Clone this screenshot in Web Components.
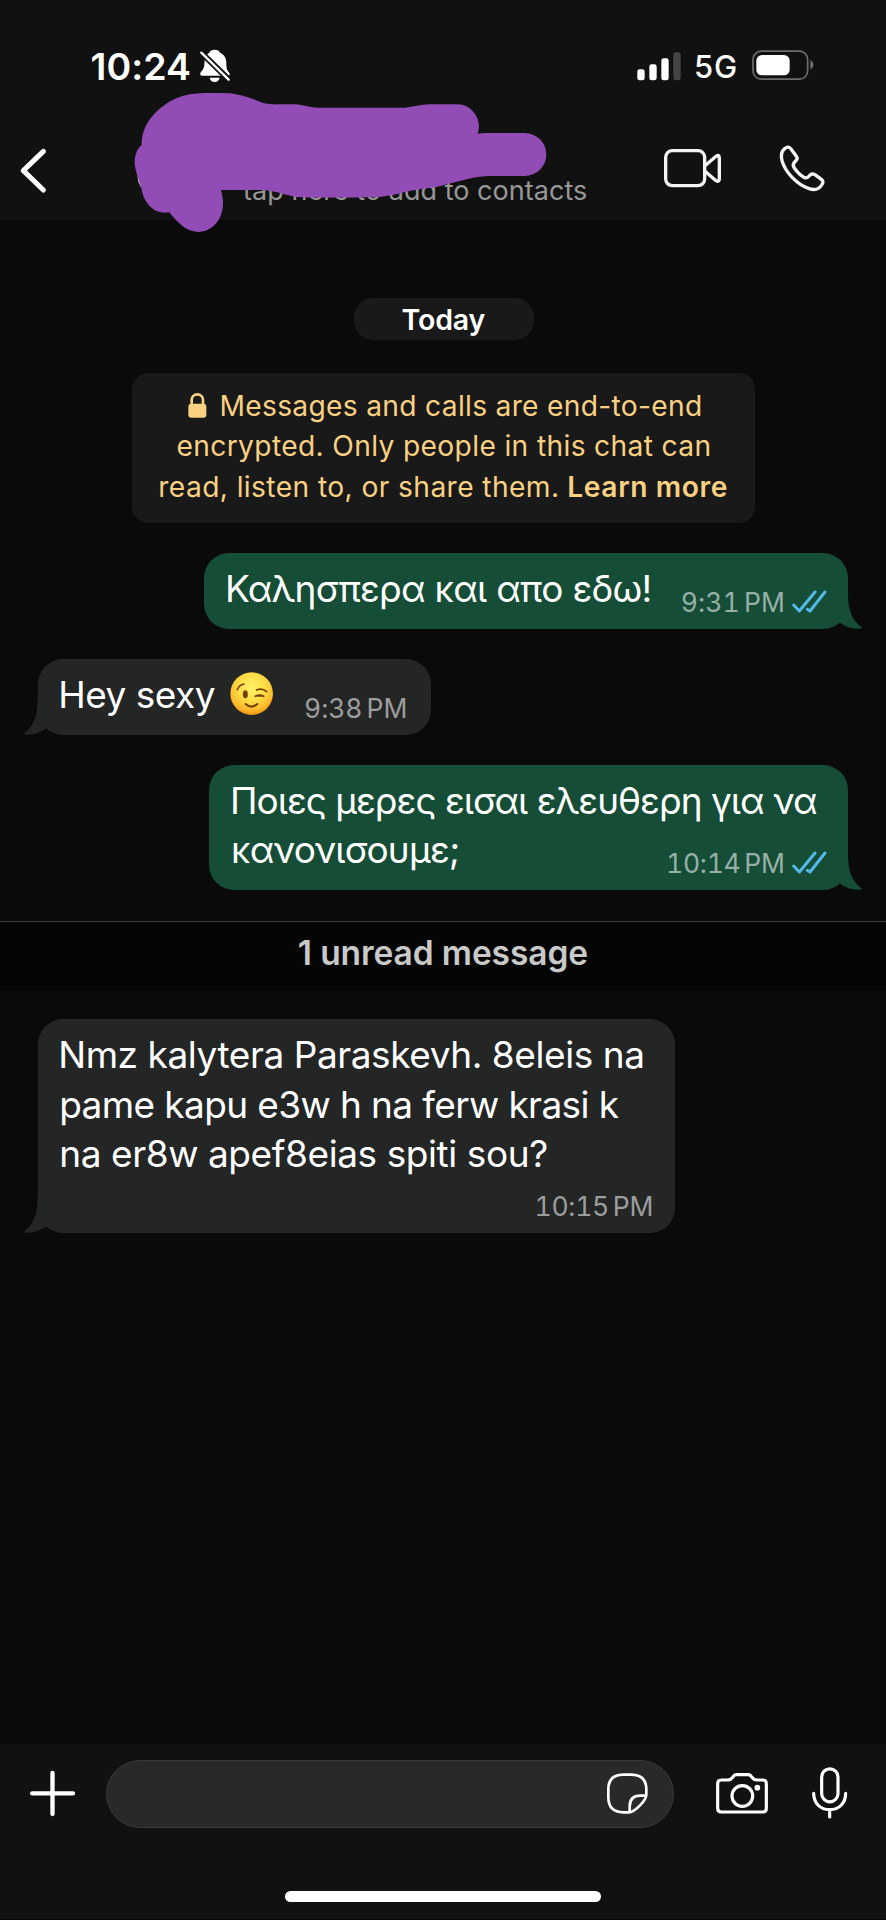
<!DOCTYPE html>
<html lang="en">
<head>
<meta charset="utf-8">
<title>Chat</title>
<style>
html,body{margin:0;padding:0;background:#0a0a0a}
body{font-family:Inter,"Liberation Sans",sans-serif;color:#fff}
</style>
</head>
<body>
<phone-screen>
  <status-bar slot="top"></status-bar>
  <chat-header slot="top"></chat-header>

  <date-pill><fit-line w="83">Today</fit-line></date-pill>
  <encryption-notice></encryption-notice>

  <chat-bubble side="out" style="--w:644px;--h:76px;--mt:30px" time="9:31 PM" time-w="101.3" read>
    <fit-line w="421.5">Καλησπερα και απο εδω!</fit-line>
  </chat-bubble>
  <chat-bubble side="in" style="--w:393.5px;--h:76px;--mt:30px;--pr:25.5px" time="9:38 PM" time-w="100.5">
    <div style="display:flex;align-items:center;gap:15px"><fit-line w="153.5">Hey sexy</fit-line><wink-face></wink-face></div>
  </chat-bubble>
  <chat-bubble side="out" style="--w:639px;--h:125px;--mt:30px" time="10:14 PM" time-w="116" read>
    <fit-line w="584">Ποιες μερες εισαι ελευθερη για να</fit-line>
    <fit-line w="225">κανονισουμε;</fit-line>
  </chat-bubble>
  <unread-divider><fit-line w="288.5">1 unread message</fit-line></unread-divider>
  <chat-bubble side="in" style="--w:637.5px;--h:213.5px;--mt:28px" time="10:15 PM" time-w="116">
    <fit-line w="581">Nmz kalytera Paraskevh. 8eleis na</fit-line>
    <fit-line w="557.5">pame kapu e3w h na ferw krasi k</fit-line>
    <fit-line w="486">na er8w apef8eias spiti sou?</fit-line>
  </chat-bubble>

  <message-composer slot="bottom"></message-composer>
</phone-screen>

<script>
const define = (name, html, init) => customElements.define(name, class extends HTMLElement {
  constructor() {
    super();
    const t = document.createElement('template');
    t.innerHTML = html;
    this.attachShadow({mode: 'open'}).append(t.content.cloneNode(true));
  }
  connectedCallback() { if (init) init.call(this, this.shadowRoot); }
});

define('phone-screen', `<style>
:host{display:flex;flex-direction:column;width:886px;height:1920px;background:#0a0a0a;overflow:hidden;position:relative}
header{height:220px;flex:none;background:#111;position:relative}
main{flex:1;display:flex;flex-direction:column;min-height:0}
</style><header><slot name="top"></slot></header><main><slot></slot></main><slot name="bottom"></slot>`);

define('status-bar', `<style>
:host{display:flex;height:106px;box-sizing:border-box;padding:43.3px 72px 0 91.5px;align-items:flex-start;--lh:46px}
.time{font-size:37.5px;font-weight:600;margin-top:.7px}
.net{font-size:31px;font-weight:500;margin:1.2px 16px 0 15.5px}
svg{display:block;flex:none}
.bell{margin:5px 0 0 8px}
.sig{margin:8.7px 0 0 auto}
.bat{margin:6.7px 0 0 0}
</style>
<fit-line class="time" w="98.5">10:24</fit-line>
<svg class="bell" width="33.3" height="35.7" viewBox="595 55 100 107"><path fill="#fff" d="M645 60C653 60 659 64 661 69C674 75 680 85 680 99C680 116 682 121 687 127C690 131 691 133 690 135C689 138 686 138 683 138H608C603 138 600 135 602 131C603 127 612 121 614 107C615 88 616 76 629 69C631 64 637 60 645 60ZM630 144H660C658 152 653 157 645 157S632 152 630 144Z"/><path d="M600 64L692 154" stroke="#111" stroke-width="18"/><path d="M605 69L687 150" stroke="#fff" stroke-width="7" stroke-linecap="round"/></svg>
<svg class="sig" width="44" height="28.7" viewBox="578 65 132 86"><g fill="#fff"><rect x="579" y="117" width="22" height="33" rx="7"/><rect x="615" y="102" width="22" height="48" rx="7"/><rect x="651" y="84" width="22" height="66" rx="7"/><rect x="687" y="66" width="22" height="84" rx="7" fill="#444"/></g></svg>
<fit-line class="net" w="40">5G</fit-line>
<svg class="bat" width="62" height="30" viewBox="923 62 186 90"><rect x="926" y="65.500" width="164" height="84" rx="25" fill="none" stroke="#6e6e6e" stroke-width="5"/><rect x="936" y="77" width="100" height="61" rx="17" fill="#fff"/><path d="M1098 93Q1107 97 1107 106.500T1098 120Z" fill="#6e6e6e"/></svg>`);

define('chat-header', `<style>
:host{display:flex;height:114px;box-sizing:border-box;padding:40.700px 61px 0 20px;align-items:flex-start;--lh:34px}
svg{display:block;flex:none}
.sub{font-size:27px;color:#989898;margin:27.500px 0 0 194.700px}
.video{margin:0 0 0 77.200px}
.call{margin:-3px 0 0 54px}
.scribble{position:absolute;left:130px;top:90px}
</style>
<svg width="28.333" height="47.333" viewBox="60 350 85 142"><path d="M130 363L70 421L130 479" fill="none" stroke="#fff" stroke-width="15" stroke-linecap="round" stroke-linejoin="round"/></svg>
<fit-line class="sub" w="343">tap here to add to contacts</fit-line>
<svg class="video" width="60" height="42" viewBox="660 351 180 126" fill="none" stroke="#f4f4f4" stroke-width="10" stroke-linejoin="round"><rect x="668" y="362" width="117" height="105" rx="20"/><path d="M786 407L819 379Q829 372 829 384V446Q829 458 819 452L786 424"/></svg>
<svg class="call" width="50" height="50" viewBox="997 342 150 150"><path d="M1020 356C1028 349 1034 351 1039 357L1055 379C1060 386 1057 389 1050 396C1044 402 1044 407 1049 414C1058 427 1070 438 1080 443C1086 445 1090 442 1094 437C1099 431 1104 430 1111 434L1131 449C1136 453 1136 459 1131 465C1123 478 1108 481 1093 476C1058 464 1022 428 1012 392C1008 376 1010 364 1020 356Z" fill="none" stroke="#f4f4f4" stroke-width="10" stroke-linejoin="round"/></svg>
<svg class="scribble" width="423.333" height="146.667" viewBox="390 180 1270 440"><path d="M411 422L424 432V475L414 455Z" fill="#9aa09a"/><path fill="#914cb6" d="M425 345C423 270 490 215 550 197C590 187 640 189 690 190C720 194 738 201 760 207C785 220 805 224 835 223H890C915 226 930 233 955 233H1215C1240 231 1260 224 1290 223H1371A64 66 0 0 1 1433 311Q1445 309 1460 309H1574A65 64.500 0 0 1 1574 438H1464C1420 440 1380 453 1340 463C1300 476 1270 475 1240 481C1200 489 1170 500 1130 501C1050 503 960 504 890 501C850 494 825 482 790 480H663C667 497 669 505 669 520C669 570 635 606 595 606C555 605 530 574 508 547C460 556 430 515 424 475C420 450 404 425 404 395C404 373 413 355 425 345Z"/></svg>`);

define('date-pill', `<style>
:host{display:flex;flex:none;justify-content:center;align-items:center;width:180px;height:42px;margin:78px 0 0 354px;border-radius:19px;background:#191919;font-size:28.500px;font-weight:600;--lh:42px;box-sizing:border-box;padding-top:1px}
</style><slot></slot>`);

define('encryption-notice', `<style>
:host{display:flex;flex:none;flex-direction:column;box-sizing:border-box;width:623px;height:150px;margin:32.500px 0 0 132px;padding-top:13.200px;border-radius:16px;background:#191919;color:#fad183;font-size:28.200px;--lh:40.500px}
div{display:flex;justify-content:center;align-items:flex-start}
b{font-weight:600}
svg{margin:7px 15px 0 1.500px}
</style>
<div><svg width="19" height="25" viewBox="203 337 57 75"><path d="M214 376V357A17 16 0 0 1 248 357V376" fill="none" stroke="#fad183" stroke-width="8"/><rect x="204" y="369" width="54" height="42" rx="9" fill="#fad183"/></svg><fit-line w="479.500">Messages and calls are end-to-end</fit-line></div>
<div><fit-line w="532">encrypted. Only people in this chat can</fit-line></div>
<div><fit-line w="396.700">read, listen to, or share them.</fit-line><b style="margin-left:12.300px"><fit-line w="157.500">Learn more</fit-line></b></div>`);

define('wink-face', `<style>:host{display:block;width:43px;height:43px;margin-top:-2px}svg{display:block}</style>
<svg role="img" aria-label="😉" width="43.300" height="43.300" viewBox="656 95 130 130"><defs><radialGradient id="g" cx=".5" cy=".36" r=".66"><stop offset="0" stop-color="#fff26a"/><stop offset=".5" stop-color="#ffdc45"/><stop offset=".8" stop-color="#fdb82b"/><stop offset="1" stop-color="#ee9210"/></radialGradient></defs><circle cx="721" cy="160" r="64" fill="url(#g)"/><g fill="none" stroke="#74410a" stroke-width="5" stroke-linecap="round"><path d="M678 148Q683 134 698 131M736 149Q752 142 766 154M732 168Q745 160 757 168M735 167H755"/><path d="M703 191Q720 207 738 191" stroke-width="6"/></g><ellipse cx="702" cy="162" rx="7.500" ry="12" fill="#74410a"/></svg>`);

define('chat-bubble', `<style>
:host{display:flex;flex:none;flex-direction:column;position:relative;box-sizing:border-box;width:var(--w);height:var(--h);margin-top:var(--mt);border-radius:25px;font-size:37px;--lh:49.700px}
:host([side=out]){align-self:flex-end;margin-right:38px;background:#154d37;padding:11.200px 21px 11.500px 24px}
:host([side=in]){align-self:flex-start;margin-left:37.500px;background:#242626;padding:11px var(--pr,23.500px) 11.500px 23.700px}
.text{display:flex;flex-direction:column;flex:none;margin-bottom:-60px}
.meta{display:flex;align-items:flex-start;gap:9px;margin-top:auto;align-self:flex-end;--lh:30px;font-size:26.500px;font-variant-numeric:tabular-nums;word-spacing:-3px;color:#9c9d9d}
:host([side=out]) .meta{color:#97b0a6}
.tail{position:absolute;bottom:0;right:-13.667px}
:host([side=in]) .tail{right:auto;left:-13.667px;transform:scaleX(-1)}
.ticks{display:none;margin-top:2.500px}
:host([read]) .ticks{display:block}
</style>
<svg class="tail" width="33.667" height="38.667" viewBox="895 150 101 116"><path class="t" d="M955 150C955 205 962 234 995 262Q998 266 992 266C965 267 945 260 930 247L896 200Z"/></svg>
<div class="text"><slot></slot></div>
<div class="meta"><fit-line></fit-line><svg class="ticks" width="35" height="23.300" viewBox="785 148 105 70" fill="none" stroke="#55b9e6" stroke-width="9" stroke-linecap="round" stroke-linejoin="round"><path d="M790 193L807 211L854 154M831 206L839 211L884 154"/></svg></div>`,
function (root) {
  const line = root.querySelector('fit-line');
  line.textContent = this.getAttribute('time');
  line.setAttribute('w', this.getAttribute('time-w'));
  root.querySelector('.t').setAttribute('fill', this.getAttribute('side') === 'out' ? '#154d37' : '#242626');
});

define('unread-divider', `<style>
:host{display:flex;flex:none;justify-content:center;box-sizing:border-box;height:70px;margin-top:31.500px;border-top:1px solid #3a3a3a;background:#050505;color:#c9c9c9;font-size:33.500px;font-weight:600;--lh:44px;padding-top:8.500px}
</style><slot></slot>`);

define('message-composer', `<style>
:host{display:block;flex:none;height:176px;background:#111;border-bottom:1px solid #080808;box-sizing:border-box}
.row{display:flex;align-items:flex-start;padding:16px 38px 0 29px;height:130px;box-sizing:content-box}
.row{height:130px;box-sizing:border-box;padding-top:16px}
.field{width:568px;height:68px;box-sizing:border-box;border:1px solid #383838;border-radius:34px;background:#292929;display:flex;justify-content:flex-end;padding:11.300px 24px 0 0;margin-left:30px}
svg{display:block;flex:none;fill:none;stroke:#fff;stroke-linecap:round;stroke-linejoin:round}
.home{width:316px;height:11.500px;border-radius:6px;background:#fff;margin:16.500px 0 0 285px}
</style>
<div class="row">
<svg style="margin-top:10.300px" width="47" height="47" viewBox="87 121 141 141" stroke-width="13"><path d="M157.500 130V253M96.500 191H219"/></svg>
<div class="field"><svg width="43" height="43" viewBox="488 128 129 129" stroke-width="8"><path d="M556 249H540C510 249 495 234 495 204V180C495 150 510 136 540 136H563C593 136 609 150 609 180V196C609 211 576 249 556 249ZM559 247V232C559 210 569 199 591 199H608"/></svg></div>
<svg style="margin:12.300px 0 0 41.300px" width="54" height="43" viewBox="816 127 162 129" stroke-width="9.500"><path d="M835 151H855C862 151 864 149 867 145L873 138C875 135 877 135 881 135H914C918 135 920 135 923 138L929 145C932 149 934 151 941 151H960C967 151 970 155 970 162V236C970 244 967 247 960 247H835C828 247 824 244 824 236V162C824 155 828 151 835 151Z"/><circle cx="898" cy="199" r="31"/><circle cx="943" cy="174" r="8.500" style="fill:#fff" stroke="none"/></svg>
<svg style="margin:5.600px 0 0 41.700px" width="37" height="54" viewBox="1104 107 111 162" stroke-width="9.500"><rect x="1136" y="115.500" width="49" height="99" rx="24.500"/><path d="M1112 189C1112 219 1132 238 1160 238S1208 219 1208 189M1160 238V260"/></svg>
</div>
<div class="home"></div>`);

/* One line of text whose ink spans exactly the width given in "w". */
const pen = document.createElement('canvas').getContext('2d');
define('fit-line', `<style>
:host{display:block;flex:none;white-space:pre;line-height:var(--lh);height:var(--lh);width:var(--ink)}
span{display:inline-block;white-space:pre}
</style><span><slot></slot></span>`, function (root) {
  const span = root.querySelector('span');
  const text = this.textContent;
  const target = parseFloat(this.getAttribute('w'));
  if (!text || !target) return;
  const cs = getComputedStyle(this);
  pen.font = cs.fontWeight + ' ' + cs.fontSize + ' ' + cs.fontFamily;
  const left = -pen.measureText(text[0]).actualBoundingBoxLeft;
  const m = pen.measureText(text[text.length - 1]);
  const right = m.width - m.actualBoundingBoxRight;
  const advance = span.getBoundingClientRect().width;
  this.style.setProperty('--ink', target + 'px');
  span.style.marginLeft = -left + 'px';
  span.style.letterSpacing = (target + left + right - advance) / (text.length - 1) + 'px';
  span.style.marginRight = '-60px';
});
</script>
</body>
</html>
